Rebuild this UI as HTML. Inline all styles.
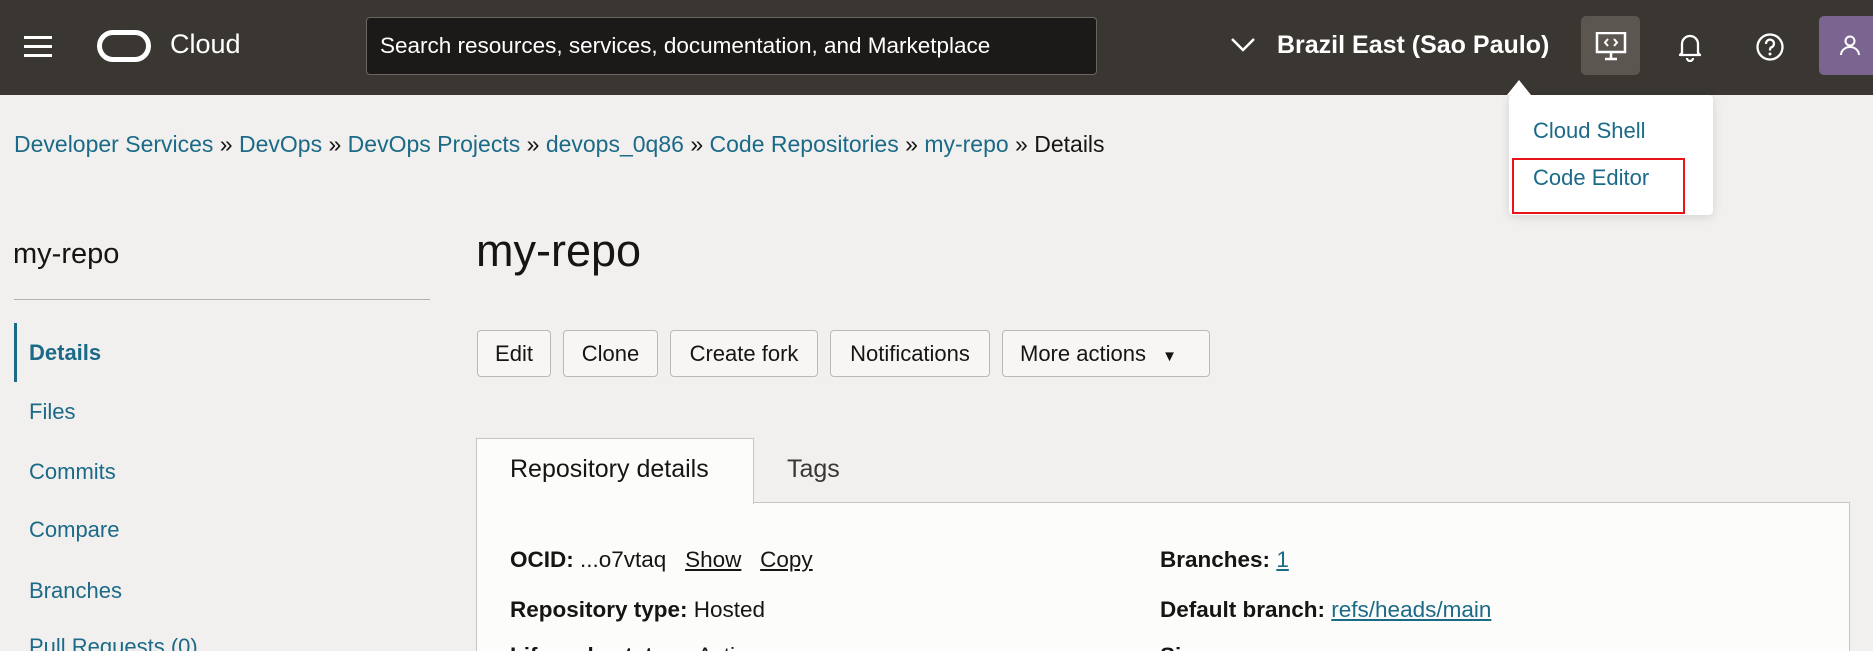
<!DOCTYPE html>
<html><head><meta charset="utf-8"><style>
*{margin:0;padding:0;box-sizing:border-box}
html,body{width:1873px;height:651px;overflow:hidden}
body{background:#f1f0ee;font-family:"Liberation Sans",Arial,sans-serif;position:relative;color:#161513}
.a{position:absolute;white-space:nowrap}
.hdr{position:absolute;left:0;top:0;width:1873px;height:95px;background:#3a3632}
.link{color:#1b6a88}
.btn{position:absolute;top:330px;height:47px;border:1px solid #bcb8b2;border-radius:4px;background:#f7f6f4;font-size:22px;line-height:45px;text-align:center;color:#161513}
.side{position:absolute;left:29px;font-size:22px;color:#1b6a88}
</style></head><body>
<div class="hdr"></div>
<div class="a" style="left:24px;top:36px;width:28px;height:3px;background:#fff"></div>
<div class="a" style="left:24px;top:45px;width:28px;height:3px;background:#fff"></div>
<div class="a" style="left:24px;top:54px;width:28px;height:3px;background:#fff"></div>
<div class="a" style="left:97px;top:30px;width:54px;height:32px;border:5px solid #fff;border-radius:16px"></div>
<div class="a" style="left:170px;top:29px;font-size:27px;color:#fff">Cloud</div>
<div class="a" style="left:366px;top:17px;width:731px;height:58px;background:#1c1a18;border:1px solid #6b6661;border-radius:4px"></div>
<div class="a" style="left:380px;top:33px;font-size:22.5px;color:#fff">Search resources, services, documentation, and Marketplace</div>
<svg class="a" style="left:1230px;top:36px" width="26" height="18" viewBox="0 0 26 18"><path d="M2 3 L13 14 L24 3" fill="none" stroke="#fff" stroke-width="2.5"/></svg>
<div class="a" style="left:1277px;top:31px;font-size:25px;font-weight:bold;color:#fff">Brazil East (Sao Paulo)</div>
<div class="a" style="left:1581px;top:16px;width:59px;height:59px;background:#5b5650;border-radius:5px"></div>
<svg class="a" style="left:1595px;top:32px" width="32" height="30" viewBox="0 0 32 30"><rect x="2" y="1" width="28" height="19" fill="none" stroke="#fff" stroke-width="2.5"/><path d="M13 7 L10 10.5 L13 14 M19 7 L22 10.5 L19 14" fill="none" stroke="#fff" stroke-width="2"/><path d="M16 20 V27 M10 27 H22" stroke="#fff" stroke-width="2.5"/></svg>
<svg class="a" style="left:1677px;top:32px" width="26" height="30" viewBox="0 0 26 30"><path d="M5 21 V12 A8 8 0 0 1 21 12 V21 L23 23 H3 Z" fill="none" stroke="#fff" stroke-width="2.3" stroke-linejoin="round"/><path d="M10 26 A3 3 0 0 0 16 26" fill="none" stroke="#fff" stroke-width="2.3"/></svg>
<svg class="a" style="left:1755px;top:32px" width="30" height="30" viewBox="0 0 30 30"><circle cx="15" cy="15" r="12.5" fill="none" stroke="#fff" stroke-width="2.3"/><path d="M11 12 A4 4 0 1 1 16 15.5 C15 16 15 17 15 18.5" fill="none" stroke="#fff" stroke-width="2.3"/><circle cx="15" cy="22" r="1.5" fill="#fff"/></svg>
<div class="a" style="left:1819px;top:16px;width:54px;height:59px;background:#7a6590;border-radius:5px 0 0 5px"></div>
<svg class="a" style="left:1838px;top:34px" width="24" height="24" viewBox="0 0 24 24"><circle cx="12" cy="7" r="4.5" fill="none" stroke="#fff" stroke-width="2"/><path d="M3 21 A9 8 0 0 1 21 21" fill="none" stroke="#fff" stroke-width="2"/></svg>
<div class="a" style="left:1509px;top:95px;width:204px;height:120px;background:#fff;border-radius:4px;box-shadow:0 2px 10px rgba(0,0,0,.12)"></div>
<div class="a" style="left:1507px;top:80px;width:0;height:0;border-left:12px solid transparent;border-right:12px solid transparent;border-bottom:15px solid #fff"></div>
<div class="a" style="left:1533px;top:118px;font-size:22px;color:#1b6a88">Cloud Shell</div>
<div class="a" style="left:1533px;top:165px;font-size:22px;color:#1b6a88">Code Editor</div>
<div class="a" style="left:1512px;top:158px;width:173px;height:56px;border:2px solid #e8141a"></div>
<div class="a" style="left:14px;top:131px;font-size:23px;color:#161513"><span class="link">Developer Services</span> » <span class="link">DevOps</span> » <span class="link">DevOps Projects</span> » <span class="link">devops_0q86</span> » <span class="link">Code Repositories</span> » <span class="link">my-repo</span> » Details</div>
<div class="a" style="left:13px;top:238px;font-size:29px">my-repo</div>
<div class="a" style="left:14px;top:299px;width:416px;height:1px;background:#b5b2ad"></div>
<div class="a" style="left:14px;top:323px;width:3px;height:59px;background:#1b6a88"></div>
<div class="side" style="top:340px;font-weight:bold">Details</div>
<div class="side" style="top:399px">Files</div>
<div class="side" style="top:459px">Commits</div>
<div class="side" style="top:517px">Compare</div>
<div class="side" style="top:578px">Branches</div>
<div class="side" style="top:634px">Pull Requests (0)</div>
<div class="a" style="left:476px;top:225px;font-size:45px">my-repo</div>
<div class="btn" style="left:477px;width:74px">Edit</div>
<div class="btn" style="left:563px;width:95px">Clone</div>
<div class="btn" style="left:670px;width:148px">Create fork</div>
<div class="btn" style="left:830px;width:160px">Notifications</div>
<div class="btn" style="left:1002px;width:208px;text-align:left;padding-left:17px">More actions <span style="font-size:15px;margin-left:10px">▼</span></div>
<div class="a" style="left:476px;top:502px;width:1374px;height:200px;background:#fcfcfa;border:1px solid #c8c4be"></div>
<div class="a" style="left:476px;top:438px;width:278px;height:66px;background:#fcfcfa;border:1px solid #c8c4be;border-bottom:none"></div>
<div class="a" style="left:510px;top:455px;font-size:25px">Repository details</div>
<div class="a" style="left:787px;top:455px;font-size:25px;color:#3a3632">Tags</div>
<div class="a" style="left:510px;top:547px;font-size:22.5px"><b>OCID:</b> ...o7vtaq&nbsp;&nbsp; <u>Show</u>&nbsp;&nbsp; <u>Copy</u></div>
<div class="a" style="left:510px;top:597px;font-size:22.5px"><b>Repository type:</b> Hosted</div>
<div class="a" style="left:510px;top:643px;font-size:22.5px"><b>Lifecycle state:</b> <span style="color:#4f8a2c">●</span> Active</div>
<div class="a" style="left:1160px;top:547px;font-size:22.5px"><b>Branches:</b> <u class="link">1</u></div>
<div class="a" style="left:1160px;top:597px;font-size:22.5px"><b>Default branch:</b> <u class="link">refs/heads/main</u></div>
<div class="a" style="left:1160px;top:643px;font-size:22.5px"><b>Size:</b></div>
</body></html>
